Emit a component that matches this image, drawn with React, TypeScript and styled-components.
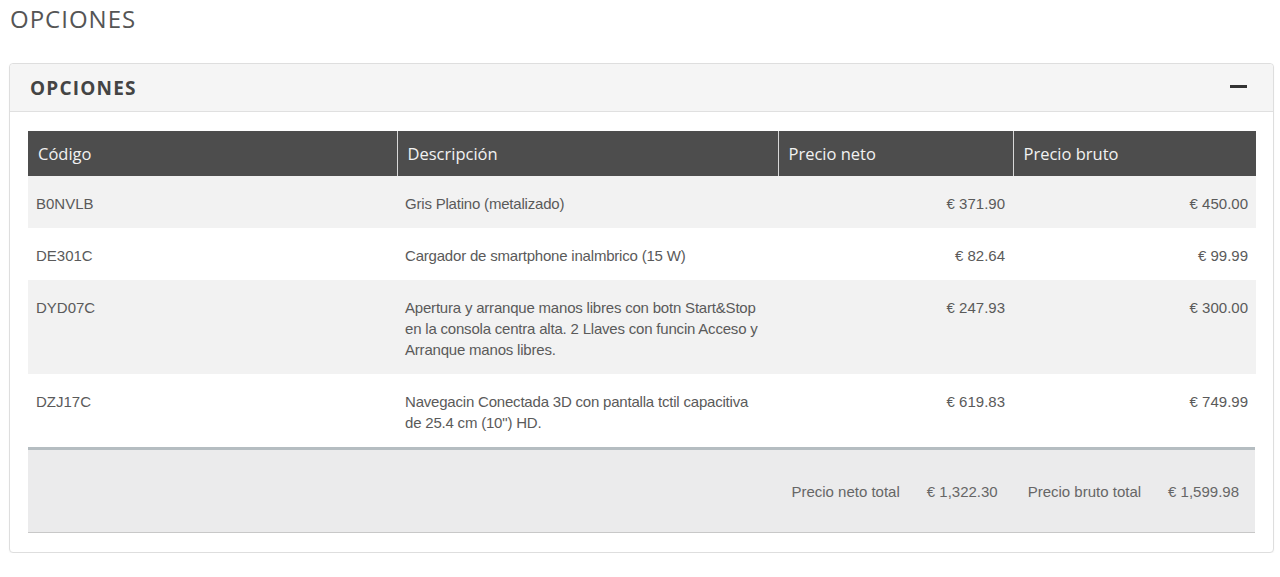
import styled, { createGlobalStyle } from "styled-components";

const GlobalStyle = createGlobalStyle`
  body {
    margin: 0;
    background: #fff;
    font-family: "Liberation Sans", Arial, sans-serif;
  }
`;

type Option = {
  code: string;
  description: string[];
  net: string;
  gross: string;
};

// lines are kept as in the source page, which wraps them at fixed points
const options: Option[] = [
  {
    code: "B0NVLB",
    description: ["Gris Platino (metalizado)"],
    net: "€ 371.90",
    gross: "€ 450.00",
  },
  {
    code: "DE301C",
    description: ["Cargador de smartphone inalmbrico (15 W)"],
    net: "€ 82.64",
    gross: "€ 99.99",
  },
  {
    code: "DYD07C",
    description: [
      "Apertura y arranque manos libres con botn Start&Stop",
      "en la consola centra alta. 2 Llaves con funcin Acceso y",
      "Arranque manos libres.",
    ],
    net: "€ 247.93",
    gross: "€ 300.00",
  },
  {
    code: "DZJ17C",
    description: [
      "Navegacin Conectada 3D con pantalla tctil capacitiva",
      "de 25.4 cm (10\") HD.",
    ],
    net: "€ 619.83",
    gross: "€ 749.99",
  },
];

export default function App() {
  return (
    <Page>
      <GlobalStyle />
      <PageTitle>OPCIONES</PageTitle>

      <Panel>
        <PanelHeader>
          <PanelTitle>OPCIONES</PanelTitle>
          <CollapseIcon aria-label="Contraer" />
        </PanelHeader>

        <PanelBody>
          <Table>
            <colgroup>
              <col style={{ width: 369 }} />
              <col style={{ width: 381 }} />
              <col style={{ width: 235 }} />
              <col style={{ width: 243 }} />
            </colgroup>
            <thead>
              <tr>
                <Th>Código</Th>
                <Th>Descripción</Th>
                <Th>Precio neto</Th>
                <Th $last>Precio bruto</Th>
              </tr>
            </thead>
            <tbody>
              {options.map((o, i) => (
                <Row key={o.code} $striped={i % 2 === 0}>
                  <Td>{o.code}</Td>
                  <Td>
                    {o.description.map((line) => (
                      <DescLine key={line}>{line}</DescLine>
                    ))}
                  </Td>
                  <Td $right>{o.net}</Td>
                  <Td $right>{o.gross}</Td>
                </Row>
              ))}
            </tbody>
          </Table>

          <TotalsBar>
            <TotalLabel>Precio neto total</TotalLabel>
            <TotalValue>€ 1,322.30</TotalValue>
            <TotalLabel>Precio bruto total</TotalLabel>
            <TotalValue>€ 1,599.98</TotalValue>
          </TotalsBar>
        </PanelBody>
      </Panel>
    </Page>
  );
}

const Page = styled.div`
  padding: 4px 6px 0 9px;
`;

const PageTitle = styled.h1`
  margin: 0 0 0 1px;
  font-family: "Open Sans", sans-serif;
  font-weight: 400;
  font-size: 24px;
  line-height: 30px;
  letter-spacing: 1px;
  color: #555;
  height: 59px;
`;

const Panel = styled.section`
  border: 1px solid #dedede;
  border-radius: 4px;
  background: #fff;
  box-shadow: 0 1px 2px rgba(0, 0, 0, 0.04);
`;

const PanelHeader = styled.div`
  display: flex;
  align-items: center;
  justify-content: space-between;
  height: 47px;
  padding: 0 26px 0 20px;
  background: #f5f5f5;
  border-bottom: 1px solid #e0e0e0;
  border-radius: 4px 4px 0 0;
`;

const PanelTitle = styled.h2`
  margin: 0;
  font-family: "Open Sans", sans-serif;
  font-weight: 700;
  font-size: 19px;
  letter-spacing: 1.2px;
  color: #444;
`;

const CollapseIcon = styled.span`
  display: block;
  width: 17px;
  height: 3px;
  background: #333;
  margin-top: -2px;
`;

const PanelBody = styled.div`
  padding: 19px 18px 19px 18px;
`;

const Table = styled.table`
  width: 100%;
  border-collapse: collapse;
  table-layout: fixed;
`;

const Th = styled.th<{ $last?: boolean }>`
  height: 45px;
  padding: 0 10px;
  background: #4d4d4d;
  color: #f2f2f2;
  font-family: "Open Sans", sans-serif;
  font-weight: 400;
  font-size: 16.5px;
  text-align: left;
  border-right: ${(p) => (p.$last ? "none" : "1px solid #d8d8d8")};
`;

const Row = styled.tr<{ $striped: boolean }>`
  background: ${(p) => (p.$striped ? "#f2f2f2" : "#fff")};
`;

const Td = styled.td<{ $right?: boolean }>`
  padding: 17px 8px 14px 8px;
  vertical-align: top;
  font-size: 15px;
  line-height: 21px;
  color: #5a5a5a;
  text-align: ${(p) => (p.$right ? "right" : "left")};
`;

const DescLine = styled.div`
  white-space: nowrap;
  letter-spacing: -0.2px;
`;

const TotalsBar = styled.div`
  display: flex;
  justify-content: flex-end;
  align-items: center;
  gap: 27px;
  height: 82px;
  padding-right: 16px;
  background: #ebebec;
  border-top: 3px solid #b5bdc1;
  border-bottom: 1px solid #c8c8c8;
  font-size: 15px;
  color: #666;
`;

const TotalLabel = styled.span`
  margin-left: 3px;
`;

const TotalValue = styled.span``;
